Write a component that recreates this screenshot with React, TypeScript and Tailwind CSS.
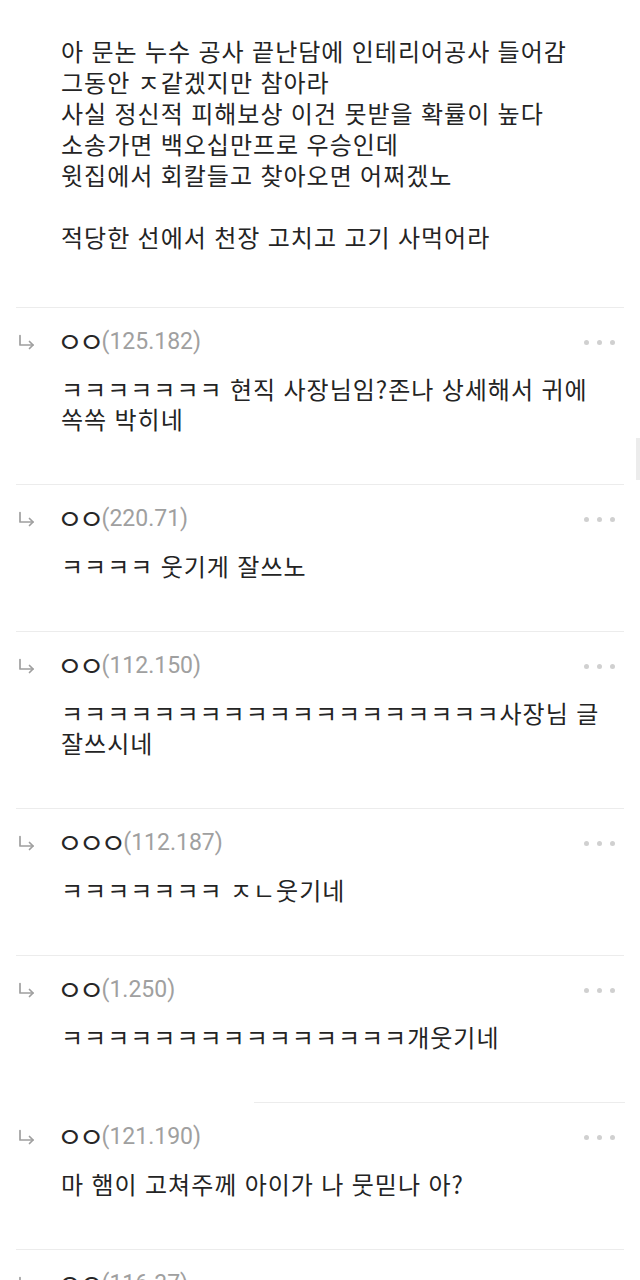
import React from "react";

const bodyFont = "font-['Noto_Sans_CJK_KR','Noto_Sans',sans-serif]";

// first line sits mostly above the top edge, as in a scrolled view
const intro: [string, string][] = [
  ["이건 윗집 잘못이니 천장 수리비는 받을 수 있다", "h-[31px]"],
  ["", "h-[35px]"],
  ["아 문논 누수 공사 끝난담에 인테리어공사 들어감", "h-[31px]"],
  ["그동안 ㅈ같겠지만 참아라", "h-[31px]"],
  ["사실 정신적 피해보상 이건 못받을 확률이 높다", "h-[31px]"],
  ["소송가면 백오십만프로 우승인데", "h-[31px]"],
  ["윗집에서 회칼들고 찾아오면 어쩌겠노", "h-[31px]"],
  ["", "h-[31px]"],
  ["적당한 선에서 천장 고치고 고기 사먹어라", "h-[31px]"],
];

type Reply = { nick: string; ip: string; lines: string[] };

const replies: Reply[] = [
  { nick: "ㅇㅇ", ip: "(125.182)", lines: ["ㅋㅋㅋㅋㅋㅋㅋ 현직 사장님임?존나 상세해서 귀에", "쏙쏙 박히네"] },
  { nick: "ㅇㅇ", ip: "(220.71)", lines: ["ㅋㅋㅋㅋ 웃기게 잘쓰노"] },
  { nick: "ㅇㅇ", ip: "(112.150)", lines: ["ㅋㅋㅋㅋㅋㅋㅋㅋㅋㅋㅋㅋㅋㅋㅋㅋㅋㅋㅋ사장님 글", "잘쓰시네"] },
  { nick: "ㅇㅇㅇ", ip: "(112.187)", lines: ["ㅋㅋㅋㅋㅋㅋㅋ ㅈㄴ웃기네"] },
  { nick: "ㅇㅇ", ip: "(1.250)", lines: ["ㅋㅋㅋㅋㅋㅋㅋㅋㅋㅋㅋㅋㅋㅋㅋ개웃기네"] },
  { nick: "ㅇㅇ", ip: "(121.190)", lines: ["마 햄이 고쳐주께 아이가 나 뭇믿나 아?"] },
  { nick: "ㅇㅇ", ip: "(116.37)", lines: [] },
];

function ReplyArrow() {
  return (
    <svg width="17" height="16" viewBox="0 0 17 16" fill="none" stroke="#9f9f9f" strokeWidth="1.7" strokeLinecap="round" strokeLinejoin="round">
      <path d="M2 1.5 V11 H15" />
      <path d="M11.5 7.5 L15 11 L11.5 14.5" />
    </svg>
  );
}

function Dots() {
  return (
    <div className="flex items-center gap-[8px]">
      <span className="h-[5px] w-[5px] rounded-full bg-[#d0d0d0]" />
      <span className="h-[5px] w-[5px] rounded-full bg-[#d0d0d0]" />
      <span className="h-[5px] w-[5px] rounded-full bg-[#d0d0d0]" />
    </div>
  );
}

function ReplyItem({ r, sepClass }: { r: Reply; sepClass: string }) {
  return (
    <div>
      <div className={sepClass} />
      <div className="pt-[20px] pb-[50px]">
        <div className="flex h-[28px] items-center justify-between pl-[18px] pr-[25px]">
          <div className="flex items-center">
            <ReplyArrow />
            <span className={`ml-[22px] -mt-[3px] text-[28px] leading-[28px] tracking-[-4px] text-[#262626] ${bodyFont}`}>{r.nick}</span>
            <span className="ml-px font-['Roboto','Noto_Sans',sans-serif] text-[23px] leading-[28px] text-[#a0a0a0]">{r.ip}</span>
          </div>
          <Dots />
        </div>
        {r.lines.length > 0 && (
          <div className={`mt-[18px] pl-[61px] text-[24px] leading-[30px] tracking-[1px] [word-spacing:1px] text-[#242424] ${bodyFont}`}>
            {r.lines.map((l, i) => (
              <div key={i} className="whitespace-nowrap">
                {l}
              </div>
            ))}
          </div>
        )}
      </div>
    </div>
  );
}

export default function App() {
  return (
    <div className="relative h-[1280px] w-[640px] overflow-hidden bg-white">
      <div className={`-mt-[31px] pb-[55px] pl-[61px] text-[24px] leading-[31px] tracking-[1px] [word-spacing:1px] text-[#242424] ${bodyFont}`}>
        {intro.map(([l, h], i) => (
          <div key={i} className={`${h} whitespace-nowrap`}>
            {l}
          </div>
        ))}
      </div>

      {replies.map((r, i) => (
        <ReplyItem
          key={i}
          r={r}
          sepClass={i === 5 ? "ml-[254px] mr-[15px] h-px bg-[#ececec]" : "mx-4 h-px bg-[#ececec]"}
        />
      ))}

      {/* scroll indicator */}
      <div className="absolute right-0 top-[438px] h-[42px] w-[4px] bg-[#ececec]" />
    </div>
  );
}
